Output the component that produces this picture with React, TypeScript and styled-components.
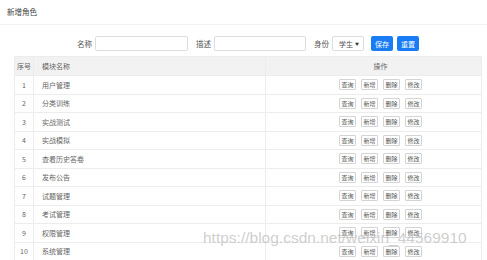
import styled, { createGlobalStyle } from 'styled-components';

const GlobalStyle = createGlobalStyle`
  body {
    margin: 0;
    background: #fff;
    font-family: "Noto Sans CJK SC", "Liberation Sans", sans-serif;
    color: #333;
  }
`;

const MODULES = [
  '用户管理',
  '分类训练',
  '实战测试',
  '实战模拟',
  '查看历史答卷',
  '发布公告',
  '试题管理',
  '考试管理',
  '权限管理',
  '系统管理',
];

const ACTIONS = ['查询', '新增', '删除', '修改'];

const App = () => {
  return (
    <Page>
      <GlobalStyle />
      <Header>新增角色</Header>
      <FormRow>
        <Label>名称</Label>
        <TextInput $width={93} />
        <Label>描述</Label>
        <TextInput $width={92} />
        <Label>身份</Label>
        <SelectBox>
          <span>学生</span>
          <Caret>▼</Caret>
        </SelectBox>
        <ButtonGroup>
          <PrimaryButton>保存</PrimaryButton>
          <PrimaryButton>重置</PrimaryButton>
        </ButtonGroup>
      </FormRow>
      <Table>
        <thead>
          <tr>
            <HeadCell $width={19} $align="center">序号</HeadCell>
            <HeadCell $width={232} $align="left">模块名称</HeadCell>
            <HeadCell $align="center" $shift>操作</HeadCell>
          </tr>
        </thead>
        <tbody>
          {MODULES.map((name, idx) => (
            <tr key={name}>
              <Cell $align="center">{idx + 1}</Cell>
              <Cell $align="left">{name}</Cell>
              <Cell $align="center" $shift>
                <ActionGroup>
                  {ACTIONS.map((action) => (
                    <SmallButton key={action}>{action}</SmallButton>
                  ))}
                </ActionGroup>
              </Cell>
            </tr>
          ))}
        </tbody>
      </Table>
      <Watermark>https://blog.csdn.net/weixin_44569910</Watermark>
    </Page>
  );
};

export default App;

const Page = styled.div`
  position: relative;
  width: 487px;
  height: 260px;
  overflow: hidden;
`;

const Header = styled.div`
  height: 25px;
  box-sizing: border-box;
  padding: 6px 8px 0 7px;
  font-size: 7.5px;
  line-height: 12px;
  color: #444;
  border-bottom: 1px solid #f2f2f2;
`;

const FormRow = styled.div`
  display: flex;
  align-items: center;
  height: 15px;
  margin-top: 11px;
  padding-left: 77px;
`;

const Label = styled.span`
  margin-right: 3px;
  font-size: 7.5px;
  color: #555;
`;

const TextInput = styled.div<{ $width: number }>`
  width: ${({ $width }) => $width}px;
  height: 15px;
  box-sizing: border-box;
  margin-right: 8px;
  border: 1px solid #ddd;
  border-radius: 2px;
  background: #fff;
`;

const SelectBox = styled.div`
  display: flex;
  align-items: center;
  justify-content: space-between;
  width: 32px;
  height: 15px;
  box-sizing: border-box;
  padding: 0 4px 0 6px;
  border: 1px solid #ddd;
  border-radius: 2px;
  font-size: 7px;
  color: #555;
`;

const Caret = styled.span`
  font-size: 4px;
  color: #333;
`;

const ButtonGroup = styled.div`
  display: flex;
  gap: 4px;
  margin-left: 7px;
`;

const PrimaryButton = styled.div`
  display: flex;
  align-items: center;
  justify-content: center;
  width: 22px;
  height: 15px;
  border-radius: 2px;
  background: #1a7cf5;
  color: #fff;
  font-size: 7px;
`;

const Table = styled.table`
  width: 468px;
  margin: 5px 0 0 14px;
  border-collapse: collapse;
  table-layout: fixed;
  font-size: 7px;
  color: #666;
`;

const HeadCell = styled.th<{ $width?: number; $align: 'left' | 'center'; $shift?: boolean }>`
  ${({ $width }) => ($width ? `width: ${$width}px;` : '')}
  height: 19px;
  box-sizing: border-box;
  padding: 0 0 0 ${({ $align, $shift }) => ($align === 'left' ? '8px' : $shift ? '14px' : '0')};
  border: 1px solid #ececec;
  background: #f2f2f2;
  font-weight: normal;
  text-align: ${({ $align }) => $align};
  color: #666;
`;

const Cell = styled.td<{ $align: 'left' | 'center'; $shift?: boolean }>`
  height: 18.5px;
  box-sizing: border-box;
  padding: 0 0 0 ${({ $align, $shift }) => ($align === 'left' ? '8px' : $shift ? '14px' : '0')};
  border: 1px solid #ececec;
  text-align: ${({ $align }) => $align};
  color: #666;
`;

const ActionGroup = styled.div`
  display: flex;
  justify-content: center;
  gap: 5px;
`;

const SmallButton = styled.div`
  display: flex;
  align-items: center;
  justify-content: center;
  width: 17px;
  height: 11px;
  box-sizing: border-box;
  border: 1px solid #d4d4d4;
  border-radius: 1px;
  background: #fff;
  font-size: 6px;
  color: #555;
`;

const Watermark = styled.div`
  position: absolute;
  left: 203px;
  top: 229px;
  font-family: "Liberation Sans", sans-serif;
  font-size: 15.5px;
  color: rgba(190, 190, 190, 0.75);
  white-space: nowrap;
  pointer-events: none;
`;
